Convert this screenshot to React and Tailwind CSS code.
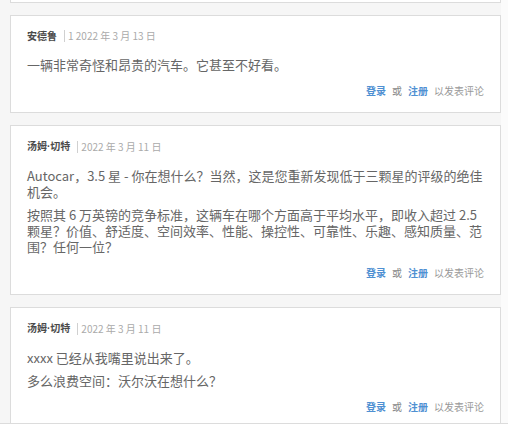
import React from "react";

const font = { fontFamily: '"Noto Sans CJK SC", "Noto Sans", sans-serif' };
const latin = { fontFamily: '"Liberation Sans", sans-serif' };

function Footer() {
  return (
    <div className="mt-[11px] flex justify-end gap-[6px] text-[10px] leading-[14px]">
      <span className="font-bold text-[#4f90d2]">登录</span>
      <span className="text-[#888]">或</span>
      <span className="font-bold text-[#4f90d2]">注册</span>
      <span className="text-[#999]">以发表评论</span>
    </div>
  );
}

function Card({ name, date, paragraphs }) {
  return (
    <div className="bg-white border border-[#dcdcdc] pt-[13px] pb-[14px] pl-[16px] pr-[16px]">
      <div className="flex items-center text-[10px] leading-[14px]">
        <span className="font-bold text-[#4a4a4a]">{name}</span>
        <span className="ml-[7px] pl-[3px] border-l border-[#d0d0d0] text-[#aaa] leading-[12px]">{date}</span>
      </div>
      <div className="mt-[14px] flex flex-col gap-[7px] text-[13px] leading-[16px] text-[#666] whitespace-nowrap">
        {paragraphs.map((p, i) => (
          <p key={i}>
            {p.map((line, j) => (
              <React.Fragment key={j}>
                {j > 0 && <br />}
                {line}
              </React.Fragment>
            ))}
          </p>
        ))}
      </div>
      <Footer />
    </div>
  );
}

const tom = (
  <>
    汤姆<span style={latin}>·</span>切特
  </>
);

export default function App() {
  return (
    <div className="w-[508px] h-[440px] bg-white" style={font}>
      <div className="flex h-[424px] overflow-hidden border-b border-[#dcdcdc]">
        <div className="w-[501px] bg-[#f6f6f6] pl-[10px] flex flex-col gap-[12px]">
          <div className="h-[3px] shrink-0 bg-white border border-t-0 border-[#dcdcdc]" />
          <Card
            name="安德鲁"
            date="1 2022 年 3 月 13 日"
            paragraphs={[["一辆非常奇怪和昂贵的汽车。它甚至不好看。"]]}
          />
          <Card
            name={tom}
            date="2022 年 3 月 11 日"
            paragraphs={[
              ["Autocar，3.5 星 - 你在想什么？当然，这是您重新发现低于三颗星的评级的绝佳", "机会。"],
              [
                "按照其 6 万英镑的竞争标准，这辆车在哪个方面高于平均水平，即收入超过 2.5",
                "颗星？价值、舒适度、空间效率、性能、操控性、可靠性、乐趣、感知质量、范",
                "围？任何一位？",
              ],
            ]}
          />
          <Card
            name={tom}
            date="2022 年 3 月 11 日"
            paragraphs={[["xxxx 已经从我嘴里说出来了。"], ["多么浪费空间：沃尔沃在想什么？"]]}
          />
        </div>
        <div className="flex-1 bg-[#fbfbfb]" />
      </div>
    </div>
  );
}
